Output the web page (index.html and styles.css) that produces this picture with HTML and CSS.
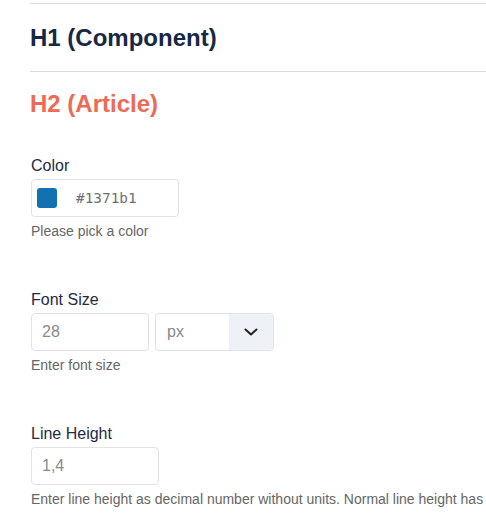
FILE: index.html
```html
<!DOCTYPE html>
<html lang="en">
<head>
  <meta charset="UTF-8" />
  <meta name="viewport" content="width=device-width, initial-scale=1" />
  <title>Typography Settings</title>
  <link rel="stylesheet" href="styles.css">
</head>
<body>
  <div class="panel">
    <div class="heading heading-component">H1 (Component)</div>
    <div class="heading heading-article">H2 (Article)</div>

    <!-- Color -->
    <div class="field">
      <label class="field-label">Color</label>
      <div class="color-input">
        <span class="swatch"></span>
        <span class="color-value">#1371b1</span>
      </div>
      <p class="help">Please pick a color</p>
    </div>

    <!-- Font size -->
    <div class="field">
      <label class="field-label">Font Size</label>
      <div class="row">
        <input type="text" class="text-input size-input" value="28" />
        <div class="select">
          <span class="select-value">px</span>
          <span class="select-arrow">
            <svg width="14" height="8" viewBox="0 0 14 8"><path d="M1.5 1.5 L7 6.5 L12.5 1.5" fill="none" stroke="#222" stroke-width="2" stroke-linecap="round" stroke-linejoin="round"/></svg>
          </span>
        </div>
      </div>
      <p class="help">Enter font size</p>
    </div>

    <!-- Line height -->
    <div class="field">
      <label class="field-label">Line Height</label>
      <input type="text" class="text-input lh-input" value="1,4" />
      <p class="help nowrap">Enter line height as decimal number without units. Normal line height has</p>
    </div>
  </div>
</body>
</html>
```

FILE: styles.css
```css
* {
  box-sizing: border-box;
}
body {
  margin: 0;
  background: #fff;
  font-family: "Liberation Sans", Arial, sans-serif;
  color: #1f2b45;
  overflow: hidden;
}
.panel {
  padding: 3px 0 0 31px;
}
.heading {
  font-size: 24px;
  font-weight: 700;
  line-height: 28px;
  margin-left: -1px;
}
.heading-component {
  color: #172844;
  border-top: 1px solid #dcdcdc;
  border-bottom: 1px solid #dcdcdc;
  padding: 20px 0 19px 0;
}
.heading-article {
  color: #ee6a55;
  padding-top: 18px;
  margin-bottom: 38px;
}
.field {
  margin-bottom: 50px;
}
.field-label {
  display: block;
  font-size: 16px;
  line-height: 20px;
  margin-bottom: 3px;
  color: #1f2b45;
}
.color-input {
  display: flex;
  align-items: center;
  width: 148px;
  height: 38px;
  border: 1px solid #e2e2e2;
  border-radius: 4px;
  padding-left: 5px;
}
.swatch {
  width: 20px;
  height: 20px;
  border-radius: 3px;
  background: #1371b1;
}
.color-value {
  margin-left: 19px;
  font-family: "DejaVu Sans Mono", "Liberation Mono", monospace;
  font-size: 14.4px;
  color: #707070;
}
.row {
  display: flex;
  gap: 6px;
}
.text-input {
  height: 38px;
  border: 1px solid #e2e2e2;
  border-radius: 4px;
  padding: 0 10px;
  font-family: inherit;
  font-size: 16px;
  color: #8a8a8a;
  background: #fff;
}
.text-input:focus {
  outline: none;
  border-color: #1371b1;
}
.size-input {
  width: 118px;
}
.lh-input {
  width: 128px;
  display: block;
}
.select {
  display: flex;
  width: 119px;
  height: 38px;
  border: 1px solid #e2e2e2;
  border-radius: 4px;
  overflow: hidden;
}
.select-value {
  flex: 1;
  display: flex;
  align-items: center;
  padding-left: 11px;
  font-size: 16px;
  color: #8a8a8a;
}
.select-arrow {
  width: 44px;
  display: flex;
  align-items: center;
  justify-content: center;
  background: #eef1f7;
}
.help {
  margin: 5px 0 0 0;
  font-size: 14px;
  line-height: 18px;
  color: #666;
}
.nowrap {
  white-space: nowrap;
}
```
